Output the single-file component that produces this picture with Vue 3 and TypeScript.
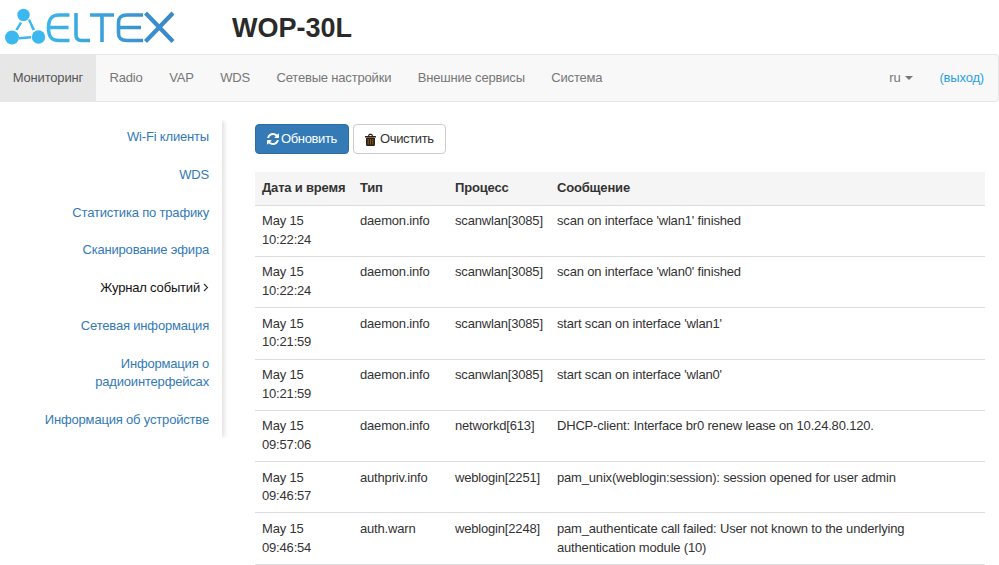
<script setup lang="ts">
const nav = ['Radio', 'VAP', 'WDS', 'Сетевые настройки', 'Внешние сервисы', 'Система']
const side = [
  { label: 'Wi-Fi клиенты' },
  { label: 'WDS' },
  { label: 'Статистика по трафику' },
  { label: 'Сканирование эфира' },
  { label: 'Журнал событий', active: true },
  { label: 'Сетевая информация' },
  { label: 'Информация о радиоинтерфейсах', narrow: true },
  { label: 'Информация об устройстве' },
]
const rows = [
  ['May 15 10:22:24', 'daemon.info', 'scanwlan[3085]', "scan on interface 'wlan1' finished"],
  ['May 15 10:22:24', 'daemon.info', 'scanwlan[3085]', "scan on interface 'wlan0' finished"],
  ['May 15 10:21:59', 'daemon.info', 'scanwlan[3085]', "start scan on interface 'wlan1'"],
  ['May 15 10:21:59', 'daemon.info', 'scanwlan[3085]', "start scan on interface 'wlan0'"],
  ['May 15 09:57:06', 'daemon.info', 'networkd[613]', 'DHCP-client: Interface br0 renew lease on 10.24.80.120.'],
  ['May 15 09:46:57', 'authpriv.info', 'weblogin[2251]', 'pam_unix(weblogin:session): session opened for user admin'],
  ['May 15 09:46:54', 'auth.warn', 'weblogin[2248]', 'pam_authenticate call failed: User not known to the underlying authentication module (10)'],
]
</script>

<template>
  <div class="page">
    <header class="top">
      <svg class="logo" width="180" height="48" viewBox="0 0 180 48" fill="none">
        <defs>
          <linearGradient id="lg" gradientUnits="userSpaceOnUse" x1="45" y1="0" x2="176" y2="0">
            <stop offset="0" stop-color="#3cb6ea" />
            <stop offset="1" stop-color="#3a86c8" />
          </linearGradient>
        </defs>
        <g fill="#3bb9ee">
          <circle cx="23.500" cy="15" r="6.200" />
          <circle cx="12" cy="37.500" r="7" />
          <circle cx="38.500" cy="37" r="6.700" />
          <path d="M20 22 L22.200 23 L17.500 30.500 L15.300 29.500 Z" />
          <path d="M28 20 L30 19 L35 29.500 L32.500 30.500 Z" />
          <path d="M19 37 L31 36 L31 38.500 L19 39.500 Z" />
        </g>
        <g stroke="url(#lg)" stroke-width="3.600" fill="none">
          <path d="M69.500 15 H59 C51.500 15 48.500 19 48.500 28 C48.500 37 51.500 40.500 59 40.500 H69.500 M49 27.500 H68.500" />
          <path d="M76 13 V35 C76 38.800 78 40.500 81.500 40.500 H90" />
          <path d="M90 15 H114 M102 15 V42" />
          <path d="M143 15 H127 C120.500 15 118.500 18 118.500 23 V33 C118.500 38 120.500 40.500 127 40.500 H143 M119 27.500 H141" />
          <path d="M145.500 13 L173 41.500 M173 13 L145.500 41.500" stroke-width="4.200" />
        </g>
      </svg>
      <h1 class="title">WOP-30L</h1>
    </header>
    <nav class="navbar">
      <a class="nav-item active">Мониторинг</a>
      <a v-for="n in nav" :key="n" class="nav-item">{{ n }}</a>
      <div class="nav-right">
        <a class="lang">ru<span class="caret"></span></a>
        <a class="logout">(выход)</a>
      </div>
    </nav>
    <div class="body">
      <aside class="side">
        <a v-for="s in side" :key="s.label" class="side-item" :class="{ on: s.active, narrow: s.narrow }">
          {{ s.label }}<svg v-if="s.active" class="chev" width="6" height="9" viewBox="0 0 6 9" fill="none"><path d="M1 1 L4.500 4.500 L1 8" stroke="#333" stroke-width="1.100" /></svg>
        </a>
      </aside>
      <main class="main">
        <div class="buttons">
          <button class="btn primary">
            <svg width="12" height="12" viewBox="0 0 1536 1536" fill="#fff"><path d="M1511 928q0 5-1 7-64 268-268 434.500T764 1536q-146 0-282.500-55T238 1324l-129 129q-19 19-45 19t-45-19-19-45V960q0-26 19-45t45-19h448q26 0 45 19t19 45-19 45l-137 137q71 66 161 102t187 36q134 0 250-65t186-179q11-17 53-117 8-23 30-23h192q13 0 22.500 9.500t9.500 22.500zm25-800v448q0 26-19 45t-45 19h-448q-26 0-45-19t-19-45 19-45l138-138Q969 256 768 256q-134 0-250 65T332 500q-11 17-53 117-8 23-30 23H50q-13 0-22.500-9.500T18 608v-7q65-268 270-434.500T768 0q146 0 284 55.500T1297 212l130-129q19-19 45-19t45 19 19 45z" /></svg>
            Обновить
          </button>
          <button class="btn plain">
            <svg width="11" height="13" viewBox="0 0 11 13"><path fill="#8a5a14" d="M2 4.500h7v7.500H2z" /><path fill="#2b2118" d="M.5 3H3l.7-1.700C3.900 1 4.200.8 4.500.8h2c.3 0 .6.200.8.500L8 3h2.500c.3 0 .5.200.5.500V4.500H0v-1C0 3.200.2 3 .5 3zM4.200 3h2.600l-.4-1H4.600zM1 5h9v6.500c0 .8-.5 1.500-1.200 1.500H2.200C1.500 13 1 12.300 1 11.500zM2.700 6v5.500h1V6zM5 6v5.500h1V6zM7.300 6v5.500h1V6z" /></svg>
            Очистить
          </button>
        </div>
        <table class="log">
          <colgroup>
            <col class="c1" /><col class="c2" /><col class="c3" /><col />
          </colgroup>
          <thead>
            <tr><th>Дата и время</th><th>Тип</th><th>Процесс</th><th>Сообщение</th></tr>
          </thead>
          <tbody>
            <tr v-for="(r, i) in rows" :key="i">
              <td v-for="(c, j) in r" :key="j" :class="{ date: j === 0 }">{{ c }}</td>
            </tr>
          </tbody>
        </table>
      </main>
    </div>
  </div>
</template>

<style>
html, body { margin: 0; overflow: hidden; background: #fff; }
</style>

<style scoped>
.page { width: 999px; height: 565px; overflow: hidden; font-family: "Liberation Sans", Arial, sans-serif; font-size: 13px; letter-spacing: -0.18px; line-height: 18.57px; color: #333; }
.top { height: 54px; display: flex; align-items: flex-start; box-sizing: border-box; }
.logo { display: block; margin-top: 0; flex: none; }
.title { margin: 12px 0 0 52px; font-size: 27px; letter-spacing: 0; line-height: 32px; font-weight: 700; color: #2a2a2a; }
.navbar { height: 48px; box-sizing: border-box; display: flex; align-items: stretch; background: #f8f8f8; border: 1px solid #e7e7e7; border-left: 0; border-radius: 0 4px 4px 0; }
.nav-item { display: flex; align-items: center; padding: 0 13.25px; color: #777; }
.nav-item.active { background: #e7e7e7; color: #555; padding-left: 12.75px; }
.nav-right { margin-left: auto; display: flex; align-items: center; padding-right: 14px; gap: 26px; }
.lang { color: #777; }
.caret { display: inline-block; margin-left: 5px; vertical-align: middle; border-top: 4px solid #777; border-left: 4px solid transparent; border-right: 4px solid transparent; }
.logout { color: #2aa3e0; }
.body { display: flex; align-items: flex-start; }
.side { width: 222px; height: 318px; flex: none; box-shadow: 3px 0 5px -1px rgba(0,0,0,.14); clip-path: inset(0 -10px 0 0); margin-top: 18px; padding-top: 8.2px; box-sizing: border-box; display: flex; flex-direction: column; align-items: flex-end; padding-right: 13px; }
.side-item { display: block; text-align: right; color: #337ab7; padding: 0 0 19.17px; }
.side-item.on { color: #111; }
.side-item.narrow { width: 140px; }
.chev { margin-left: 3px; }
.main { margin-left: 33px; width: 730px; padding-top: 22px; }
.buttons { display: flex; gap: 4px; margin-bottom: 18px; }
.btn { font: inherit; letter-spacing: -0.36px; height: 30px; box-sizing: border-box; border-radius: 4px; padding: 0 11px; border: 1px solid #ccc; background: #fff; color: #333; display: flex; align-items: center; gap: 4px; }
.btn.primary { background: #337ab7; border-color: #2e6da4; color: #fff; gap: 2px; }
.log { width: 730px; border-collapse: collapse; table-layout: fixed; }
.c1 { width: 98px; } .c2 { width: 95px; } .c3 { width: 102px; }
th { background: #f5f5f5; text-align: left; padding: 7px; height: 33px; box-sizing: border-box; border-bottom: 1px solid #ddd; font-weight: 700; white-space: nowrap; }
td { padding: 6.6px 7px; border-bottom: 1px solid #ddd; vertical-align: top; }
td.date { width: 60px; }
</style>
